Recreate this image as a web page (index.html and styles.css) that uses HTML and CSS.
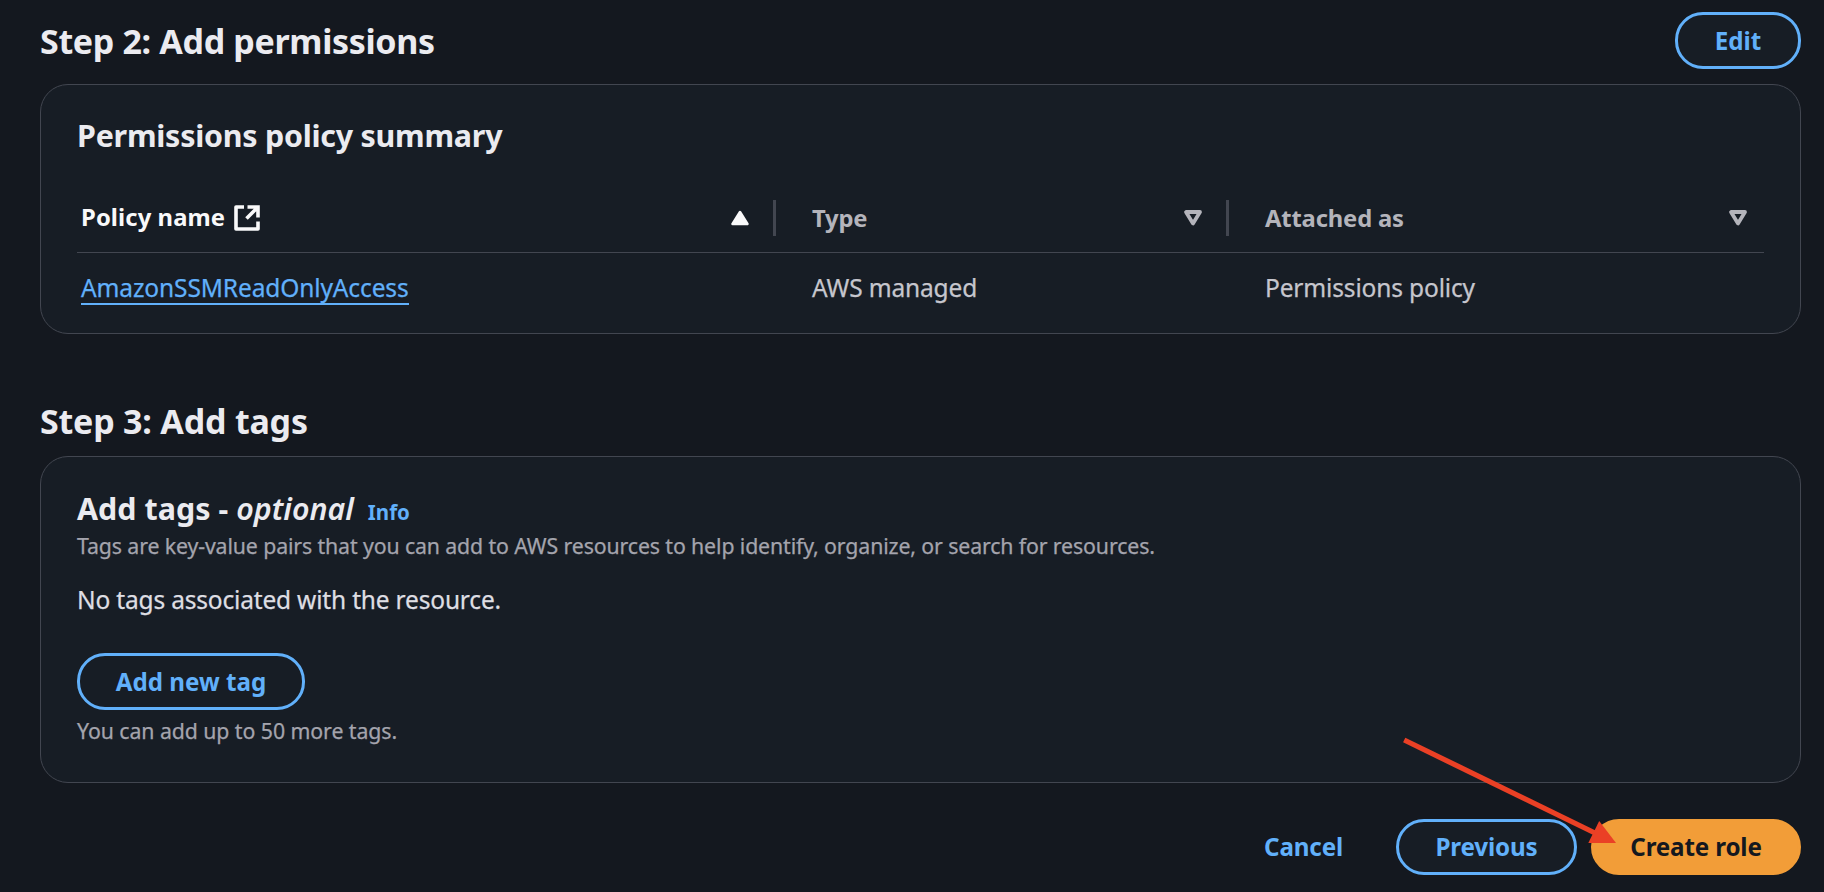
FILE: index.html
```html
<!DOCTYPE html>
<html lang="en">
<head>
<meta charset="utf-8">
<title>Create role</title>
<link rel="stylesheet" href="styles.css">
</head>
<body>
<main class="page">
  <section>
    <header class="step-header step-header-actions">
      <h2 class="step-title">Step 2: Add permissions</h2>
      <button class="btn btn-edit">Edit</button>
    </header>
    <div class="card card-permissions">
      <h3 class="card-title">Permissions policy summary</h3>
      <div class="table">
        <div class="row head">
          <div class="cell sorted">
            <span class="label label-name">Policy name</span>
            <svg class="external" viewBox="0 0 26 26" fill="none" stroke="currentColor" stroke-width="3.6">
              <path d="M10 2H2V24H24V16.5" stroke-linejoin="round"/>
              <path d="M13.5 2H24V12.5M24 2L12.5 13.5"/>
            </svg>
            <svg class="sort" viewBox="0 0 18 16"><path d="M9 2L16.5 14H1.5Z" fill="currentColor" stroke="currentColor" stroke-width="2.5" stroke-linejoin="round"/></svg>
          </div>
          <div class="cell">
            <span class="label">Type</span>
            <svg class="sort" viewBox="0 0 18 16"><path d="M2 2H16L9 13.5Z" fill="none" stroke="currentColor" stroke-width="3.8" stroke-linejoin="round"/></svg>
          </div>
          <div class="cell">
            <span class="label">Attached as</span>
            <svg class="sort" viewBox="0 0 18 16"><path d="M2 2H16L9 13.5Z" fill="none" stroke="currentColor" stroke-width="3.8" stroke-linejoin="round"/></svg>
          </div>
        </div>
        <div class="row">
          <div class="cell"><a class="policy-link">AmazonSSMReadOnlyAccess</a></div>
          <div class="cell">AWS managed</div>
          <div class="cell">Permissions policy</div>
        </div>
      </div>
    </div>
  </section>

  <section class="step-tags">
    <header class="step-header">
      <h2 class="step-title step-title-tags">Step 3: Add tags</h2>
    </header>
    <div class="card card-tags">
      <h3 class="card-title card-title-tags">Add tags - <i class="optional">optional</i><a class="info">Info</a></h3>
      <p class="small description">Tags are key-value pairs that you can add to AWS resources to help identify, organize, or search for resources.</p>
      <p class="empty">No tags associated with the resource.</p>
      <button class="btn btn-add">Add new tag</button>
      <p class="small limit">You can add up to 50 more tags.</p>
    </div>
  </section>

  <footer class="actions">
    <button class="btn btn-link">Cancel</button>
    <button class="btn btn-previous">Previous</button>
    <button class="btn btn-primary">Create role</button>
  </footer>
</main>
<svg class="arrow" viewBox="0 0 220 110">
  <path d="M4.2 4L196 97.5" stroke="#ea4025" stroke-width="5.2"/>
  <path d="M216 107L188.3 107L199.2 85Z" fill="#ea4025"/>
</svg>
</body>
</html>
```
FILE: styles.css
```css
* { box-sizing: border-box; }

body {
  margin: 0;
  height: 892px;
  overflow: hidden;
  background: #14181f;
  color: #dedee3;
  font-family: "Noto Sans", "Open Sans", sans-serif;
  font-size: 24.5px;
}

h2, h3, p { margin: 0; }

.page { padding: 12px 23px 0 40px; }

.step-header { display: flex; align-items: center; height: 46px; margin-bottom: 12px; }
.step-header-actions { justify-content: space-between; height: 57px; margin-bottom: 15px; }
.step-title {
  color: #ebebf0;
  font-size: 34px;
  font-weight: 700;
  line-height: 46px;
  letter-spacing: -0.33px;
}
.step-title-tags { letter-spacing: -0.2px; }
.step-tags { margin-top: 64px; }

.card {
  border: 1px solid #424650;
  border-radius: 28px;
  background: #171d25;
}
.card-permissions { height: 250px; padding: 31px 36px 0; }
.card-tags { height: 327px; padding: 32px 36px 0; }
.card-title {
  display: flex;
  align-items: baseline;
  height: 40px;
  color: #ebebf0;
  font-size: 30.4px;
  font-weight: 700;
  line-height: 40px;
  letter-spacing: -0.24px;
  white-space: pre;
}
.card-title-tags { letter-spacing: 0.05px; }

.table { margin-top: 28px; color: #c6c6cd; }
.row { display: grid; grid-template-columns: 699px 453px 1fr; height: 69px; }
.cell {
  display: flex;
  align-items: center;
  padding-left: 36px;
  line-height: 34px;
  letter-spacing: -0.15px;
  -webkit-text-stroke: 0.25px currentColor;
}
.cell:first-child { padding-left: 4px; }
.head {
  align-items: center;
  border-bottom: 1px solid #424650;
  color: #b4b4bb;
  font-size: 23.8px;
  font-weight: 700;
}
.head .cell {
  height: 36px;
  padding-right: 24px;
  border-right: 3px solid #424650;
  letter-spacing: -0.17px;
  -webkit-text-stroke: 0;
}
.head .cell:last-child { padding-right: 17px; border-right: 0; }
.head .sorted { color: #f9f9fa; }
.head .label-name { padding-bottom: 3px; letter-spacing: 0.1px; }
.external { width: 26px; height: 26px; margin-left: 9px; }
.sort { width: 18px; height: 16px; margin-left: auto; overflow: visible; }

.policy-link {
  height: 35px;
  padding-top: 1px;
  border-bottom: 2px solid #61b0fa;
  color: #61b0fa;
  line-height: 34px;
  letter-spacing: -0.12px;
}

.optional { font-weight: 600; letter-spacing: 0; }
.info { margin-left: 14px; color: #61b0fa; font-size: 20.5px; letter-spacing: 0; }
.small {
  color: #a4a4ad;
  font-size: 21.3px;
  line-height: 30px;
  letter-spacing: -0.12px;
  -webkit-text-stroke: 0.25px currentColor;
}
.description { margin-top: 2px; }
.empty {
  margin-top: 21px;
  line-height: 36px;
  letter-spacing: -0.18px;
  -webkit-text-stroke: 0.25px currentColor;
}
.limit { margin-top: 6px; letter-spacing: -0.07px; }

.btn {
  display: block;
  height: 57px;
  padding: 0;
  border: 3px solid #61b0fa;
  border-radius: 28px;
  background: #171d25;
  color: #61b0fa;
  font: 700 24.2px/34px "Noto Sans", "Open Sans", sans-serif;
}
.btn-edit { width: 126px; }
.btn-add { width: 228px; margin-top: 35px; }

.actions { display: flex; justify-content: flex-end; margin-top: 36px; }
.actions .btn { height: 56px; letter-spacing: -0.15px; }
.actions .btn-link { margin-right: 53px; border: 0; background: none; }
.actions .btn-previous { width: 181px; margin-right: 14px; }
.actions .btn-primary { width: 210px; border-color: #f29d38; background: #f29d38; color: #14181f; }

.arrow { position: absolute; left: 1400px; top: 736px; width: 220px; height: 110px; }
```
